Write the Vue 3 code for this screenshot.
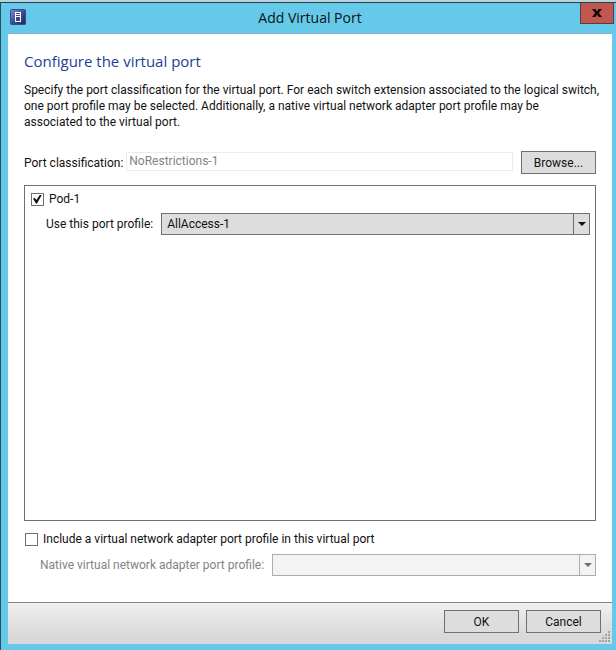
<template>
  <div class="desktop">
    <div class="window">
      <header class="title-bar">
        <svg class="app-icon" viewBox="0 0 16 16" aria-hidden="true">
          <defs>
            <linearGradient id="icon-bg" x1="0" y1="0" x2="1" y2="1">
              <stop offset="0" stop-color="#7c92cc" />
              <stop offset="0.5" stop-color="#3a4d97" />
              <stop offset="1" stop-color="#22235f" />
            </linearGradient>
          </defs>
          <rect x="0.5" y="0.5" width="15" height="15" rx="1" fill="url(#icon-bg)" stroke="#39498a" />
          <rect x="5.5" y="3.5" width="5" height="9" fill="#3c4688" stroke="#ffffff" />
          <path d="M6 5.5 H10 M6 7.5 H10" stroke="#ffffff" />
        </svg>
        <h1>Add Virtual Port</h1>
        <button class="btn-close" type="button" aria-label="Close">
          <svg viewBox="0 0 10 8" aria-hidden="true">
            <path d="M0 0 H3.4 L5 2.4 L6.6 0 H10 L6.8 4 L10 8 H6.6 L5 5.6 L3.4 8 H0 L3.2 4 Z" fill="#120808" />
          </svg>
        </button>
      </header>

      <form class="dialog" @submit.prevent>
        <main class="content">
          <h2>Configure the virtual port</h2>
          <p class="intro">
            Specify the port classification for the virtual port. For each switch extension associated to the logical switch,<br>
            one port profile may be selected. Additionally, a native virtual network adapter port profile may be<br>
            associated to the virtual port.
          </p>

          <div class="row classification">
            <label for="classification">Port classification:</label>
            <input id="classification" v-model="classification" type="text" disabled>
            <button class="btn" type="button">Browse...</button>
          </div>

          <div class="extensions">
            <div class="check">
              <input id="pod" v-model="podEnabled" type="checkbox">
              <label for="pod">Pod-1</label>
            </div>
            <div class="row profile">
              <label for="profile">Use this port profile:</label>
              <div class="combo">
                <select id="profile" v-model="profile" :disabled="!podEnabled">
                  <option v-for="p in profiles" :key="p">{{ p }}</option>
                </select>
                <span class="arrow"></span>
              </div>
            </div>
          </div>

          <div class="check include">
            <input id="include" v-model="includeNative" type="checkbox">
            <label for="include">Include a virtual network adapter port profile in this virtual port</label>
          </div>
          <div class="row native" :class="{ off: !includeNative }">
            <label for="native">Native virtual network adapter port profile:</label>
            <div class="combo">
              <select id="native" v-model="nativeProfile" :disabled="!includeNative"></select>
              <span class="arrow"></span>
            </div>
          </div>
        </main>

        <footer class="footer">
          <button class="btn" type="submit">OK</button>
          <button class="btn" type="button">Cancel</button>
          <svg class="grip" viewBox="0 0 11 11" aria-hidden="true">
            <rect v-for="d in gripDots" :key="`${d.x}-${d.y}`" :x="d.x" :y="d.y" width="2" height="2" fill="#a6a6a6" />
          </svg>
        </footer>
      </form>
    </div>
  </div>
</template>

<script setup>
import { ref } from 'vue'

const classification = ref('NoRestrictions-1')
const podEnabled = ref(true)
const profiles = ['AllAccess-1']
const profile = ref('AllAccess-1')
const includeNative = ref(false)
const nativeProfile = ref('')

// resize grip: staircase of dots, one more in each row
const gripDots = []
for (let r = 0; r < 4; r++) {
  for (let c = 3 - r; c < 4; c++) {
    gripDots.push({ x: c * 3, y: r * 3 })
  }
}
</script>

<style>
body {
  margin: 0;
}
</style>

<style scoped>
* {
  box-sizing: border-box;
}

.desktop {
  display: flex;
  min-height: 100vh;
  padding-top: 2px;
  background: #b9d3da;
  font-family: Roboto, "Open Sans", sans-serif;
  font-size: 12px;
  line-height: 16px;
  color: #111;
}

.window {
  flex: 1;
  display: flex;
  flex-direction: column;
  padding: 0 4px 6px 7px;
  background: #65c9e9;
  border-top: 1px solid #24404c;
  border-left: 1px solid #24505f;
}

.title-bar {
  position: relative;
  display: flex;
  align-items: center;
  justify-content: center;
  height: 30px;
}

.title-bar h1 {
  margin: 0;
  font-family: "Open Sans", sans-serif;
  font-size: 14px;
  font-weight: 400;
  line-height: 20px;
}

.app-icon {
  position: absolute;
  left: 2px;
  top: 6px;
  width: 16px;
  height: 16px;
}

.btn-close {
  position: absolute;
  top: 0;
  right: -2px;
  display: flex;
  align-items: center;
  justify-content: center;
  width: 34px;
  height: 21px;
  padding: 0;
  background: #c1584f;
  border: 1px solid #5e3a40;
  border-top: none;
}

.btn-close svg {
  width: 10px;
  height: 8px;
}

.dialog {
  flex: 1;
  display: flex;
  flex-direction: column;
  background: #fff;
  border-top: 1px solid #84b4c8;
}

.content {
  flex: 1;
  display: flex;
  flex-direction: column;
  padding: 16px 16px 26px;
}

h2 {
  margin: 0 0 10px;
  font-family: "Open Sans", sans-serif;
  font-size: 15px;
  font-weight: 400;
  line-height: 22px;
  color: #1c3f95;
}

.intro {
  margin: 0 -12px 21px 0;
}

.row {
  display: flex;
  align-items: center;
}

.row label {
  white-space: nowrap;
}

.classification input {
  flex: 1;
  min-width: 0;
  height: 19px;
  margin: 0 8px 3px 3px;
  padding: 0 2px;
  font: inherit;
  color: #838383;
  background: #fff;
  border: 1px solid #ececec;
}

.btn {
  width: 75px;
  height: 23px;
  padding: 0;
  font: inherit;
  color: #111;
  background: #dddddd;
  border: 1px solid #707070;
}

.extensions {
  flex: 1;
  margin: 11px 0 10px;
  padding: 5px 5px 0 6px;
  border: 1px solid #6e7074;
}

.check {
  display: flex;
  align-items: center;
  gap: 5px;
}

.check input {
  appearance: none;
  display: grid;
  place-items: center;
  width: 13px;
  height: 13px;
  margin: 0;
  background: #fff;
  border: 1px solid #707070;
}

.check input:checked::before {
  content: "";
  width: 9px;
  height: 9px;
  background: #111;
  clip-path: polygon(0 45%, 20% 38%, 38% 62%, 78% 0, 100% 0, 45% 100%, 32% 100%);
}

.profile {
  margin-top: 6px;
  padding-left: 15px;
}

.combo {
  position: relative;
  flex: 1;
  height: 22px;
  margin-left: 8px;
}

.combo select {
  appearance: none;
  display: block;
  width: 100%;
  height: 100%;
  padding: 0 20px 0 5px;
  font: inherit;
  color: #111;
  background: #dddddd;
  border: 1px solid #707070;
  border-radius: 0;
}

.arrow {
  position: absolute;
  top: 1px;
  right: 1px;
  bottom: 1px;
  display: grid;
  place-items: center;
  width: 16px;
  border-left: 1px solid #707070;
  pointer-events: none;
}

.arrow::before {
  content: "";
  border: 4px solid transparent;
  border-top-color: #111;
  border-bottom: none;
}

.include {
  padding-left: 1px;
}

.native {
  margin-top: 7px;
  padding-left: 16px;
}

.off {
  color: #838383;
}

.off select {
  background: #f3f3f3;
  border-color: #adadad;
  opacity: 1;
}

.off .arrow {
  border-color: #adadad;
}

.off .arrow::before {
  border-top-color: #6d6d6d;
}

.footer {
  position: relative;
  display: flex;
  justify-content: flex-end;
  gap: 7px;
  padding: 7px 11px 11px;
  background: linear-gradient(#f0f0f0, #d9d9d9 80%);
  border-top: 1px solid #858585;
}

.grip {
  position: absolute;
  right: 2px;
  bottom: 2px;
  width: 11px;
  height: 11px;
}
</style>
